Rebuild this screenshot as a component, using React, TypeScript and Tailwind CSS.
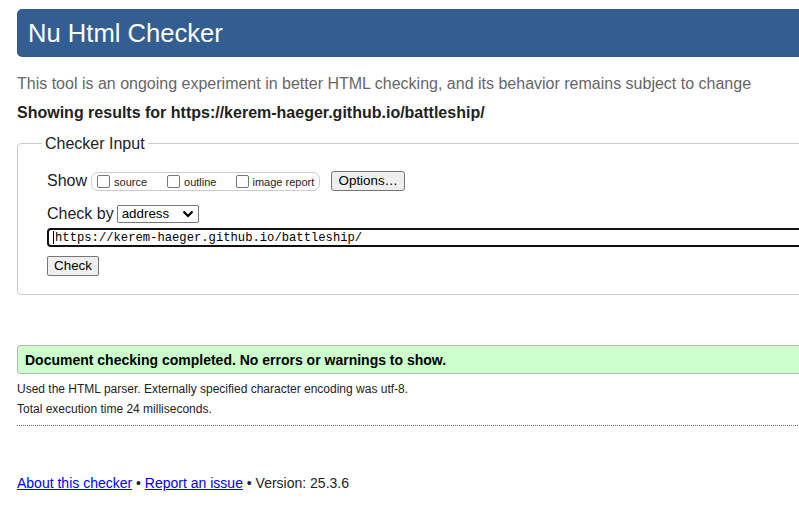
import React from "react";

function Checkbox() {
  return (
    <span className="inline-block h-[13px] w-[13px] shrink-0 rounded-[2px] border border-[#767676] bg-white" />
  );
}

export default function App() {
  return (
    <div className="w-full overflow-hidden bg-white" style={{ fontFamily: '"Liberation Sans", Arial, sans-serif' }}>
      <div className="w-[1000px] pl-[17px] pb-[20px]">
        {/* Header */}
        <div className="mt-[9px] h-[48px] rounded-[5px] bg-[#335e91] pl-[11px] text-[25.6px] leading-[48px] text-white">
          Nu Html Checker
        </div>

        <p className="mt-[18px] text-[16px] leading-[18px] text-[#666666]">
          This tool is an ongoing experiment in better HTML checking, and its behavior remains subject to change
        </p>
        <p className="mt-[11px] text-[16px] font-bold leading-[18px] text-[#222222]">
          Showing results for https://kerem-haeger.github.io/battleship/
        </p>

        {/* Checker input */}
        <fieldset className="mt-[12.5px] rounded-[4px] border border-[#cccccc] pl-[29px] pt-[18.5px] pb-[18px]">
          <legend className="ml-[-5px] px-[3px] text-[16px] leading-[18px] text-[#222222]">Checker Input</legend>

          <div className="flex h-[20px] items-center">
            <span className="text-[16px] leading-[18px] text-[#222222]">Show</span>
            <div className="ml-[4px] flex h-[19px] items-center gap-[20px] rounded-[7px] border border-[#cccccc] pl-[5px] pr-[5px] text-[11px] leading-[13px] text-[#222222]">
              <label className="flex items-center gap-[4px]">
                <Checkbox />
                <span className="mt-[2px]">source</span>
              </label>
              <label className="flex items-center gap-[4px]">
                <Checkbox />
                <span className="mt-[2px]">outline</span>
              </label>
              <label className="flex items-center gap-[3px]">
                <Checkbox />
                <span className="mt-[2px]">image report</span>
              </label>
            </div>
            <button className="ml-[11px] h-[20px] w-[74px] rounded-[3px] border border-[#767676] bg-[#efefef] text-[13.333px] leading-[16px] text-black">
              Options…
            </button>
          </div>

          <div className="mt-[14px] flex h-[18px] items-center">
            <span className="text-[16px] leading-[18px] text-[#222222]">Check by</span>
            <div className="ml-[3px] flex h-[18px] w-[82px] items-center justify-between rounded-[2px] border border-[#767676] bg-white pl-[4px] pr-[3px] text-[13.333px] leading-[16px] text-black">
              <span>address</span>
              <svg width="12" height="8" viewBox="0 0 12 8" className="mr-[1px]">
                <path d="M1.5 1.5 L6 6 L10.5 1.5" fill="none" stroke="#000" strokeWidth="2.2" />
              </svg>
            </div>
          </div>

          <div className="mt-[5px] flex h-[19px] items-center rounded-[4px] border-2 border-[#101010] bg-white pl-[4px] text-[12.2px] leading-[14px] text-black" style={{ fontFamily: '"Liberation Mono", "DejaVu Sans Mono", monospace' }}>
            <span className="mr-[1px] inline-block h-[13px] w-[1px] bg-black" />
            <span>https://kerem-haeger.github.io/battleship/</span>
          </div>

          <button className="mt-[9px] block h-[20px] w-[52px] rounded-[2px] border border-[#767676] bg-[#efefef] text-[13.333px] leading-[16px] text-black">
            Check
          </button>
        </fieldset>

        {/* Result */}
        <div className="mt-[50px] rounded-[3px] border border-[#b8b8b8] bg-[#ccffcc] py-[5.5px] pl-[7px] text-[14px] font-bold leading-[16px] text-black">
          Document checking completed. No errors or warnings to show.
        </div>

        <p className="mt-[7.5px] text-[12px] leading-[14px] text-[#222222]">
          Used the HTML parser. Externally specified character encoding was utf-8.
        </p>
        <p className="mt-[6px] text-[12px] leading-[14px] text-[#222222]">Total execution time 24 milliseconds.</p>

        <div className="mt-[9px] border-t border-dotted border-[#666666]" />

        <p className="mt-[49px] text-[14px] leading-[16px] text-[#222222]">
          <a href="#" className="text-[#0000ee] underline">About this checker</a>
          {" • "}
          <a href="#" className="text-[#0000ee] underline">Report an issue</a>
          {" • Version: 25.3.6"}
        </p>
      </div>
    </div>
  );
}
